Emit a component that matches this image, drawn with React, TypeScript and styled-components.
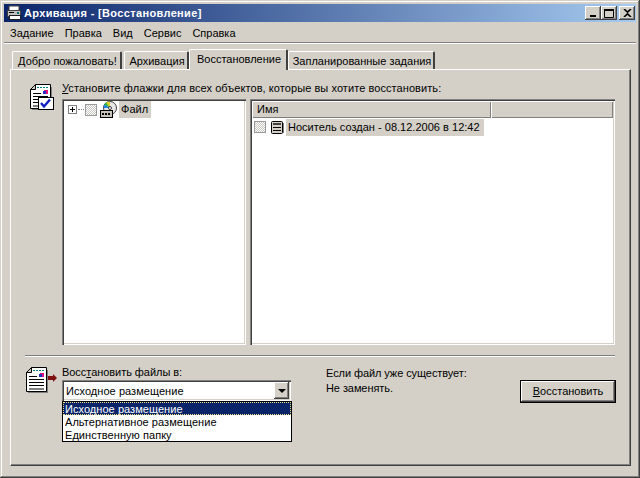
import React from "react";
import styled, { createGlobalStyle } from "styled-components";

const GlobalStyle = createGlobalStyle`
  html, body { margin: 0; padding: 0; background: #d4d0c8; }
  body { font-family: "Liberation Sans", Arial, sans-serif; font-size: 11px; color: #000; }
`;

const Window = styled.div`
  width: 640px;
  height: 478px;
  box-sizing: border-box;
  padding: 4px;
  background: #d4d0c8;
  display: flex;
  flex-direction: column;
  box-shadow: inset -1px -1px 0 #404040, inset 1px 1px 0 #d4d0c8, inset -2px -2px 0 #808080, inset 2px 2px 0 #fff;
`;

const TitleBar = styled.div`
  height: 18px;
  flex: none;
  display: flex;
  align-items: center;
  padding: 0 1px 0 2px;
  background: linear-gradient(90deg, #0a246a, #a6caf0);
`;

const TitleText = styled.div`
  margin-left: 2px;
  flex: 1;
  color: #fff;
  font-weight: 700;
  font-size: 11px;
  letter-spacing: 0.35px;
`;

const CaptionButton = styled.div<{ $gap?: number }>`
  width: 16px;
  height: 14px;
  margin-left: ${(p) => p.$gap ?? 0}px;
  background: #d4d0c8;
  box-shadow: inset -1px -1px 0 #404040, inset 1px 1px 0 #fff, inset -2px -2px 0 #808080;
  display: flex;
  align-items: center;
  justify-content: center;
`;

const MenuBar = styled.div`
  height: 19px;
  flex: none;
  display: flex;
  align-items: center;
  padding-left: 6px;
  gap: 11px;
  margin-top: 1px;
  border-bottom: 1px solid #808080;
  box-shadow: 0 1px 0 #fff;
`;

const Body = styled.div`
  flex: 1;
  display: flex;
  flex-direction: column;
  padding: 6px 5px 8px 6px;
`;

const TabStrip = styled.div`
  height: 20px;
  flex: none;
  display: flex;
  align-items: flex-end;
  padding-left: 2px;
  position: relative;
  z-index: 1;
`;

const Tab = styled.div<{ $active?: boolean; $w: number; $gap?: number }>`
  box-sizing: border-box;
  width: ${(p) => p.$w}px;
  margin-left: ${(p) => p.$gap ?? 0}px;
  height: ${(p) => (p.$active ? 21 : 18)}px;
  margin-bottom: ${(p) => (p.$active ? -1 : 0)}px;
  padding: 3px 0 0 2px;
  text-align: center;
  white-space: nowrap;
  background: #d4d0c8;
  border-radius: 2px 2px 0 0;
  border-top: 1px solid #fff;
  border-left: 1px solid #fff;
  border-right: 2px solid #404040;
`;

const Panel = styled.div`
  flex: 1;
  box-sizing: border-box;
  padding: 12px 15px 0 14px;
  border-top: 1px solid #fff;
  border-left: 1px solid #fff;
  border-right: 1px solid #404040;
  border-bottom: 1px solid #404040;
  box-shadow: inset -1px -1px 0 #808080;
`;

const TopSection = styled.div`
  display: grid;
  grid-template-columns: 37px 1fr;
`;

const IconCell = styled.div`
  padding: 2px 0 0 5px;
`;

const Label = styled.div<{ $tight?: boolean }>`
  line-height: 13px;
  letter-spacing: ${(p) => (p.$tight ? -0.05 : 0.07)}px;
  white-space: nowrap;
`;

const Panes = styled.div`
  margin-top: 4px;
  height: 246px;
  display: grid;
  grid-template-columns: 184px 365px;
  gap: 4px;
`;

const Sunken = styled.div`
  background: #fff;
  box-sizing: border-box;
  padding: 2px;
  box-shadow: inset 1px 1px 0 #808080, inset 2px 2px 0 #404040, inset -1px -1px 0 #fff, inset -2px -2px 0 #d4d0c8;
`;

const TreeRow = styled.div`
  height: 17px;
  display: flex;
  align-items: center;
`;

const Expander = styled.div`
  width: 9px;
  height: 9px;
  box-sizing: border-box;
  margin-left: 4px;
  border: 1px solid #808080;
  background: #fff;
  position: relative;
  &::before {
    content: "";
    position: absolute;
    left: 1px;
    right: 1px;
    top: 3px;
    height: 1px;
    background: #000;
  }
  &::after {
    content: "";
    position: absolute;
    top: 1px;
    bottom: 1px;
    left: 3px;
    width: 1px;
    background: #000;
  }
`;

const TreeDots = styled.div`
  width: 6px;
  margin: 0 1px;
  border-top: 1px dotted #808080;
`;

const CheckBox = styled.div`
  width: 12px;
  height: 12px;
  flex: none;
  box-sizing: border-box;
  border: 1px solid #9a9a9a;
  background-color: #d4d0c8;
  background-image: conic-gradient(#fff 25%, #c8c6c0 0 50%, #fff 0 75%, #c8c6c0 0);
  background-size: 2px 2px;
`;

const NodeLabel = styled.div<{ $w: number }>`
  width: ${(p) => p.$w}px;
  box-sizing: border-box;
  height: 17px;
  line-height: 17px;
  padding-left: 2px;
  background: #d4d0c8;
  white-space: nowrap;
  letter-spacing: 0.02px;
`;

const ColumnHeaders = styled.div`
  display: grid;
  grid-template-columns: 239px 1fr;
  height: 17px;
`;

const ColumnHeader = styled.div`
  background: #d4d0c8;
  box-sizing: border-box;
  padding-left: 5px;
  line-height: 17px;
  box-shadow: inset 1px 1px 0 #fff, inset -1px -1px 0 #808080;
`;

const ListRow = styled.div`
  display: flex;
  align-items: center;
  height: 18px;
  padding-left: 2px;
`;

const Separator = styled.div`
  margin-top: 10px;
  height: 1px;
  background: #808080;
  border-bottom: 1px solid #fff;
`;

const BottomSection = styled.div`
  margin-top: 9px;
  display: flex;
`;

const DocCell = styled.div`
  width: 36px;
  flex: none;
  padding: 1px 0 0 1px;
`;

const TargetColumn = styled.div`
  width: 230px;
  flex: none;
`;

const Combo = styled.div`
  position: relative;
  width: 229px;
  height: 21px;
  margin-top: 1px;
  box-sizing: border-box;
  background: #fff;
  padding: 2px 2px 2px 4px;
  display: flex;
  align-items: center;
  justify-content: space-between;
  box-shadow: inset 1px 1px 0 #808080, inset 2px 2px 0 #404040, inset -1px -1px 0 #fff, inset -2px -2px 0 #d4d0c8;
  letter-spacing: 0.05px;
`;

const ComboButton = styled.div`
  width: 15px;
  height: 17px;
  background: #d4d0c8;
  box-shadow: inset -1px -1px 0 #404040, inset 1px 1px 0 #fff, inset -2px -2px 0 #808080;
  display: flex;
  align-items: center;
  justify-content: center;
  &::after {
    content: "";
    border-left: 4px solid transparent;
    border-right: 4px solid transparent;
    border-top: 4px solid #000;
  }
`;

const DropList = styled.div`
  position: absolute;
  left: 0;
  top: 21px;
  width: 230px;
  height: 41px;
  box-sizing: border-box;
  background: #fff;
  border: 1px solid #000;
  letter-spacing: 0.05px;
`;

const DropItem = styled.div<{ $selected?: boolean }>`
  height: 13px;
  line-height: 14px;
  padding-left: 2px;
  box-sizing: border-box;
  white-space: nowrap;
  ${(p) =>
    p.$selected
      ? `background: #0a246a; color: #fff; outline: 1px dotted #f0e080; outline-offset: -1px;`
      : ""}
`;

const InfoColumn = styled.div`
  margin-left: 34px;
  flex: 1;
  line-height: 15px;
  letter-spacing: -0.08px;
`;

const ActionButton = styled.div`
  width: 96px;
  height: 23px;
  margin: 14px -1px 0 0;
  box-sizing: border-box;
  border: 1px solid #000;
  background: #d4d0c8;
  text-align: center;
  line-height: 20px;
  box-shadow: inset -1px -1px 0 #404040, inset 1px 1px 0 #fff, inset -2px -2px 0 #808080;
`;

const AppIcon = () => (
  <svg width="16" height="16" viewBox="0 0 16 16">
    <rect x="3" y="1" width="10" height="5" fill="#fff" stroke="#404040" />
    <rect x="1.5" y="5.5" width="13" height="6" fill="#c0c0c0" stroke="#404040" />
    <rect x="3" y="7" width="5" height="1" fill="#000" />
    <rect x="3.5" y="10.5" width="11" height="4" fill="#fff" stroke="#202020" />
    <rect x="11" y="7" width="2" height="2" fill="#0a6a6a" />
  </svg>
);

const MinGlyph = () => (
  <svg width="8" height="8" viewBox="0 0 8 8"><rect x="1" y="6" width="6" height="2" fill="#000" /></svg>
);

const MaxGlyph = () => (
  <svg width="10" height="9" viewBox="0 0 10 9"><path d="M.5 1.5h9v7h-9z" fill="none" stroke="#000" /><rect x="0" y="0" width="10" height="2" fill="#000" /></svg>
);

const CloseGlyph = () => (
  <svg width="9" height="8" viewBox="0 0 9 8"><path d="M1 0l3.5 3.2L8 0M1 8l3.5-3.2L8 8" fill="none" stroke="#000" strokeWidth="1.6" /></svg>
);

const PageLines = () => (
  <>
    <rect x="2" y="3" width="20" height="23" fill="#808080" />
    <path d="M.5 5.5l5-5h15v24H.5z" fill="#fff" stroke="#000" />
    <path d="M.5 5.5h5v-5z" fill="#d4d0c8" stroke="#000" />
    <path d="M7 3h2v1H7zM10 3h2v1h-2zM13 3h2v1h-2zM16 3h2v1h-2z" fill="#008080" />
    <rect x="14" y="6" width="4" height="4" fill="#e01080" />
    <rect x="13" y="7" width="3" height="3" fill="#2030c0" />
    <rect x="3" y="9" width="8" height="1" fill="#000" />
    <rect x="3" y="12" width="15" height="1" fill="#000" />
    <rect x="3" y="15" width="15" height="1" fill="#000" />
    <rect x="3" y="18" width="15" height="1" fill="#000" />
    <rect x="3" y="21" width="15" height="2" fill="#808080" />
  </>
);

const RestoreCheckIcon = () => (
  <svg width="24" height="26" viewBox="0 0 24 26">
    <PageLines />
    <rect x="8.5" y="13.5" width="15" height="12" fill="#fff" stroke="#000" />
    <path d="M11 19l3 3.5 6-7" fill="none" stroke="#1020c0" strokeWidth="2.4" />
  </svg>
);

const RestoreTargetIcon = () => (
  <svg width="31" height="28" viewBox="0 0 31 28">
    <PageLines />
    <path d="M22 9h5V7l4 4-4 4v-2h-5z" fill="#801010" />
  </svg>
);

const MediaDiscIcon = () => (
  <svg width="17" height="17" viewBox="0 0 17 17">
    <circle cx="10" cy="7" r="6.5" fill="#e8e8e8" stroke="#404040" />
    <path d="M10 7L6 1.5 10 .5z" fill="#e0d020" />
    <path d="M10 7L4 3.5 6 1.5z" fill="#20b040" />
    <path d="M10 7L3.5 7 4 3.5z" fill="#2080e0" />
    <circle cx="10" cy="7" r="1.5" fill="#fff" stroke="#404040" />
    <rect x="0.5" y="9.5" width="12" height="7" fill="#c8c4bc" stroke="#000" />
    <rect x="2" y="12" width="2" height="2" fill="#000" />
    <rect x="5" y="12" width="2" height="2" fill="#000" />
    <rect x="8" y="12" width="2" height="2" fill="#000" />
  </svg>
);

const MediaSetIcon = () => (
  <svg width="13" height="13" viewBox="0 0 13 13">
    <rect x="0.5" y="0.5" width="11" height="12" rx="1" fill="#d4d0c8" stroke="#000" />
    <rect x="12" y="2" width="1" height="10" fill="#808080" />
    <rect x="2" y="2" width="8" height="2" fill="#404040" />
    <rect x="2" y="6" width="8" height="1" fill="#000" />
    <rect x="2" y="9" width="8" height="1" fill="#000" />
  </svg>
);

const U = styled.span`
  text-decoration: underline;
`;

const TreeIconSlot = styled.div`
  margin: 0 2px 0 3px;
  display: flex;
`;

const ListIconSlot = styled.div`
  margin: 0 2px 0 5px;
  display: flex;
`;

export default function App() {
  return (
    <Window>
      <GlobalStyle />
      <TitleBar>
        <AppIcon />
        <TitleText>Архивация - [Восстановление]</TitleText>
        <CaptionButton><MinGlyph /></CaptionButton>
        <CaptionButton><MaxGlyph /></CaptionButton>
        <CaptionButton $gap={2}><CloseGlyph /></CaptionButton>
      </TitleBar>
      <MenuBar>
        <span>Задание</span>
        <span>Правка</span>
        <span>Вид</span>
        <span>Сервис</span>
        <span>Справка</span>
      </MenuBar>
      <Body>
        <TabStrip>
          <Tab $w={110}>Добро пожаловать!</Tab>
          <Tab $w={65} $gap={2}>Архивация</Tab>
          <Tab $active $w={99}>Восстановление</Tab>
          <Tab $w={147}>Запланированные задания</Tab>
        </TabStrip>
        <Panel>
          <TopSection>
            <IconCell><RestoreCheckIcon /></IconCell>
            <div>
              <Label><U>У</U>становите флажки для всех объектов, которые вы хотите восстановить:</Label>
              <Panes>
                <Sunken>
                  <TreeRow>
                    <Expander />
                    <TreeDots />
                    <CheckBox />
                    <TreeIconSlot><MediaDiscIcon /></TreeIconSlot>
                    <NodeLabel $w={32}>Файл</NodeLabel>
                  </TreeRow>
                </Sunken>
                <Sunken>
                  <ColumnHeaders>
                    <ColumnHeader>Имя</ColumnHeader>
                    <ColumnHeader />
                  </ColumnHeaders>
                  <ListRow>
                    <CheckBox />
                    <ListIconSlot><MediaSetIcon /></ListIconSlot>
                    <NodeLabel $w={198}>Носитель создан - 08.12.2006 в 12:42</NodeLabel>
                  </ListRow>
                </Sunken>
              </Panes>
            </div>
          </TopSection>
          <Separator />
          <BottomSection>
            <DocCell><RestoreTargetIcon /></DocCell>
            <TargetColumn>
              <Label $tight>Восс<U>т</U>ановить файлы в:</Label>
              <Combo>
                <span>Исходное размещение</span>
                <ComboButton />
                <DropList>
                  <DropItem $selected>Исходное размещение</DropItem>
                  <DropItem>Альтернативное размещение</DropItem>
                  <DropItem>Единственную папку</DropItem>
                </DropList>
              </Combo>
            </TargetColumn>
            <InfoColumn>
              Если файл уже существует:
              <br />
              Не заменять.
            </InfoColumn>
            <ActionButton><U>В</U>осстановить</ActionButton>
          </BottomSection>
        </Panel>
      </Body>
    </Window>
  );
}
